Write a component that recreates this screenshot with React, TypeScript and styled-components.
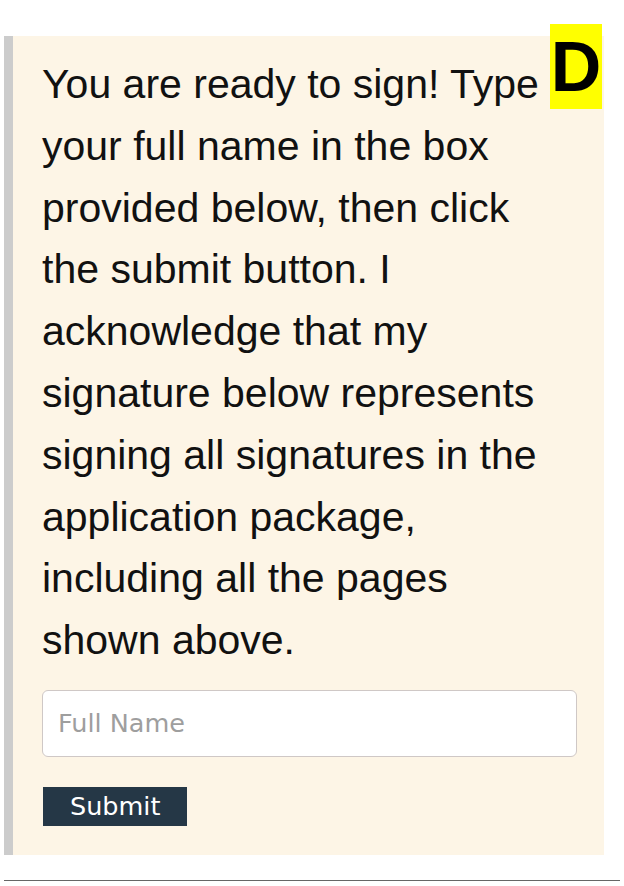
import React from "react";
import styled, { createGlobalStyle } from "styled-components";

const GlobalStyle = createGlobalStyle`
  html, body {
    margin: 0;
    padding: 0;
    background: #ffffff;
  }
  * {
    box-sizing: border-box;
  }
`;

const Page = styled.div`
  padding: 36px 4px 0 4px;
`;

const Panel = styled.section`
  position: relative;
  width: 600px;
  background: #fdf5e6;
  border-left: 9px solid #cccccc;
  padding: 18px 27px 29px 29px;
  display: flex;
  flex-direction: column;
  align-items: flex-start;
`;

const Badge = styled.div`
  position: absolute;
  top: -12px;
  right: 2px;
  width: 52px;
  height: 85px;
  padding-top: 2px;
  background: #ffff00;
  color: #000000;
  font-family: "Liberation Sans", Arial, sans-serif;
  font-weight: 700;
  font-size: 70px;
  line-height: 83px;
  text-align: center;
`;

const Message = styled.p`
  margin: 0;
  width: 520px;
  font-family: "Liberation Sans", Arial, sans-serif;
  font-size: 41px;
  line-height: 61.8px;
  color: #111111;
`;

const NameInput = styled.input`
  margin-top: 18px;
  width: 100%;
  height: 67px;
  padding: 0 15px;
  border: 1.5px solid #cfc8c6;
  border-radius: 6px;
  background: #ffffff;
  font-family: "DejaVu Sans", Verdana, sans-serif;
  font-size: 25.5px;
  color: #333333;
  outline: none;

  &::placeholder {
    color: #9e9e9e;
  }
`;

const SubmitButton = styled.button`
  margin-top: 30px;
  margin-left: 1px;
  padding: 4.5px 27px;
  border: none;
  border-radius: 0;
  background: #253746;
  color: #ffffff;
  font-family: "DejaVu Sans", Verdana, sans-serif;
  font-size: 25.5px;
  line-height: 30px;
  cursor: pointer;
`;

const Rule = styled.hr`
  margin: 25px 0 0 0;
  border: none;
  border-top: 1.5px solid #666666;
  height: 0;
`;

export default function App() {
  return (
    <>
      <GlobalStyle />
      <Page>
        <Panel>
          <Badge>D</Badge>
          <Message>
            You are ready to sign! Type your full name in the box provided
            below, then click the submit button. I acknowledge that my
            signature below represents signing all signatures in the
            application package, including all the pages shown above.
          </Message>
          <NameInput type="text" placeholder="Full Name" />
          <SubmitButton type="button">Submit</SubmitButton>
        </Panel>
        <Rule />
      </Page>
    </>
  );
}
